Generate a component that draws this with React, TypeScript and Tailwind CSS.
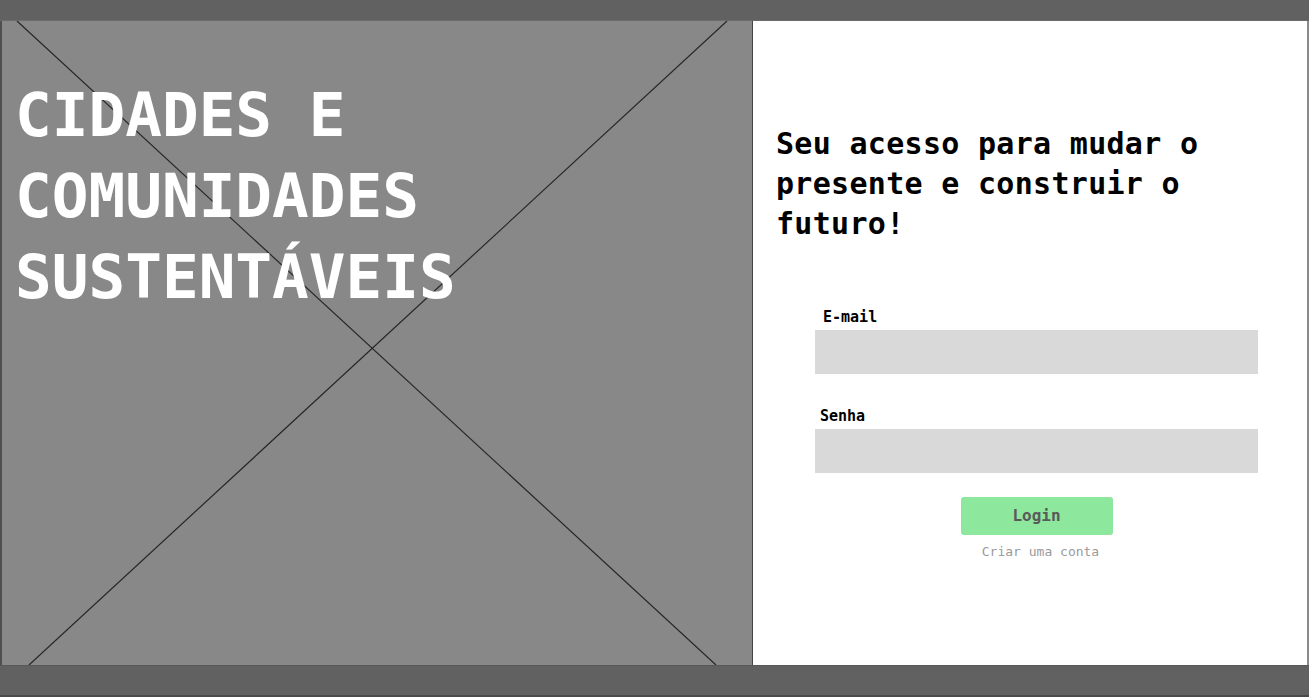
export default function App() {
  return (
    <div className="w-[1309px] h-[697px] flex flex-col bg-[#606060] font-['DejaVu_Sans_Mono',monospace] overflow-hidden">
      {/* top bar */}
      <div className="h-[21px] shrink-0 bg-[#616161] border-b border-[#6b6b6b]" />

      <div className="flex h-[644px] shrink-0">
        {/* image placeholder */}
        <div className="relative w-[752px] shrink-0 bg-[#888888] border-l-2 border-[#4f4f4f]">
          <svg className="absolute inset-0 w-full h-full" viewBox="0 0 750 644" preserveAspectRatio="none">
            <line x1="15" y1="0" x2="714" y2="644" stroke="#262626" strokeWidth="1.2" />
            <line x1="725" y1="0" x2="27" y2="644" stroke="#262626" strokeWidth="1.2" />
          </svg>
          <h1 className="relative pl-[13px] pt-[53px] text-[61px] leading-[81px] font-bold text-white">
            CIDADES E<br />
            COMUNIDADES<br />
            SUSTENTÁVEIS
          </h1>
        </div>

        {/* login */}
        <div className="flex-1 bg-white border-l border-[#444] border-r-2 border-r-[#8a8a8a] flex flex-col">
          <h2 className="pl-[23px] pt-[103px] text-[30px] leading-[40px] font-bold text-black tracking-[0.3px]">
            Seu acesso para mudar o<br />
            presente e construir o<br />
            futuro!
          </h2>

          <div className="mt-[63px] pl-[62px] pr-[49px] flex flex-col">
            <label className="pl-[8px] text-[15px] leading-[20px] font-bold text-black">E-mail</label>
            <div className="mt-[3px] h-[44px] bg-[#d9d9d9]" />
            <label className="mt-[32px] pl-[5px] text-[15px] leading-[20px] font-bold text-black">Senha</label>
            <div className="mt-[3px] h-[44px] bg-[#d9d9d9]" />

            <div className="mt-[24px] flex flex-col items-center">
              <button className="w-[152px] h-[38px] rounded-[3px] bg-[#8de79c] text-[16px] font-bold text-[#5a5a5a]">
                Login
              </button>
              <span className="mt-[9px] ml-[8px] text-[13px] leading-[16px] text-[#9a9a9a]">Criar uma conta</span>
            </div>
          </div>
        </div>
      </div>

      {/* bottom bar */}
      <div className="flex-1 bg-[#616161] border-t border-[#585858] border-b-2 border-b-[#4a4a4a]" />
    </div>
  );
}
